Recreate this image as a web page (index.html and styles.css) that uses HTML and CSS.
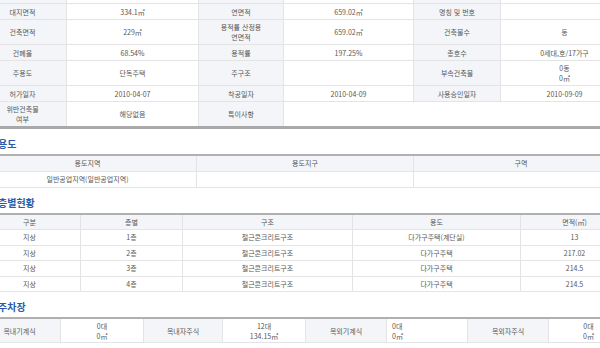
FILE: index.html
```html
<!DOCTYPE html>
<html lang="ko">
<head>
<meta charset="utf-8">
<link rel="stylesheet" href="styles.css">
</head>
<body>
<div class="wrap">
  <table class="tbl tbl-main">
    <colgroup><col style="width:88px"><col style="width:132px"><col style="width:85px"><col style="width:130px"><col style="width:87px"><col style="width:128px"></colgroup>
    <tr class="r1"><th></th><td></td><th></th><td></td><th></th><td></td></tr>
    <tr class="r1"><th>대지면적</th><td>334.1㎡</td><th>연면적</th><td>659.02㎡</td><th>명칭 및 번호</th><td></td></tr>
    <tr><th>건축면적</th><td>229㎡</td><th>용적률 산정용<br>연면적</th><td>659.02㎡</td><th>건축물수</th><td>동</td></tr>
    <tr class="r1"><th>건폐율</th><td>68.54%</td><th>용적률</th><td>197.25%</td><th>총호수</th><td>0세대,호/17가구</td></tr>
    <tr><th>주용도</th><td>단독주택</td><th>주구조</th><td></td><th>부속건축물</th><td>0동<br>0㎡</td></tr>
    <tr class="r1"><th>허가일자</th><td>2010-04-07</td><th>착공일자</th><td>2010-04-09</td><th>사용승인일자</th><td>2010-09-09</td></tr>
    <tr><th>위반건축물<br>여부</th><td>해당없음</td><th>특이사항</th><td colspan="3"></td></tr>
  </table>

  <h2 class="title">용도</h2>
  <table class="tbl tbl-use">
    <colgroup><col style="width:218px"><col style="width:217px"><col style="width:215px"></colgroup>
    <tr class="r1 head"><th>용도지역</th><th>용도지구</th><th>구역</th></tr>
    <tr class="r1"><td>일반공업지역(일반공업지역)</td><td></td><td></td></tr>
  </table>

  <h2 class="title">층별현황</h2>
  <table class="tbl tbl-floor">
    <colgroup><col style="width:102px"><col style="width:102px"><col style="width:170px"><col style="width:168px"><col style="width:108px"></colgroup>
    <tr class="r1 head"><th>구분</th><th>층별</th><th>구조</th><th>용도</th><th>면적(㎡)</th></tr>
    <tr class="rf"><td>지상</td><td>1층</td><td>철근콘크리트구조</td><td>다가구주택(계단실)</td><td>13</td></tr>
    <tr class="rf"><td>지상</td><td>2층</td><td>철근콘크리트구조</td><td>다가구주택</td><td>217.02</td></tr>
    <tr class="rf"><td>지상</td><td>3층</td><td>철근콘크리트구조</td><td>다가구주택</td><td>214.5</td></tr>
    <tr class="rf"><td>지상</td><td>4층</td><td>철근콘크리트구조</td><td>다가구주택</td><td>214.5</td></tr>
  </table>

  <h2 class="title">주차장</h2>
  <table class="tbl tbl-park">
    <colgroup><col style="width:82px"><col style="width:83px"><col style="width:79px"><col style="width:83px"><col style="width:81px"><col style="width:81px"><col style="width:81px"><col style="width:80px"></colgroup>
    <tr><th>옥내기계식</th><td>0대<br>0㎡</td><th>옥내자주식</th><td>12대<br>134.15㎡</td><th>옥외기계식</th><td class="val-left">0대<br>0㎡</td><th>옥외자주식</th><td>0대<br>0㎡</td></tr>
  </table>
</div>
</body>
</html>
```

FILE: styles.css
```css
html, body {
  margin: 0;
  padding: 0;
  background: #ffffff;
  overflow: hidden;
}
body {
  font-family: "Noto Sans CJK KR", "Noto Sans", sans-serif;
  font-size: 7px;
  color: #555555;
}
.wrap {
  width: 650px;
  margin: -13px 0 0 -22px;
}
.tbl {
  width: 650px;
  table-layout: fixed;
  border-collapse: collapse;
}
.tbl th,
.tbl td {
  border: 1px solid #e4e4e4;
  text-align: center;
  vertical-align: middle;
  padding: 2px 3px;
  line-height: 10px;
  font-weight: normal;
  color: #585858;
}
.tbl th {
  background: #f3f5f8;
}
.tbl td {
  background: #ffffff;
}
.tbl .head th {
  background: #f3f5f8;
}
.r1 {
  height: 16px;
}
.rf {
  height: 15.5px;
}
.tbl-main {
  border-bottom: 3px solid #a9a9a9;
}
.tbl-use,
.tbl-floor,
.tbl-park {
  border-top: 2px solid #b0b0b0;
  border-bottom: 1px solid #b0b0b0;
}
.tbl-park td,
.tbl-park th {
  padding: 1.5px 3px;
}
.tbl-park td.val-left {
  text-align: left;
  padding-left: 5px;
}
.title {
  margin: 0;
  padding: 5px 0 0 20px;
  height: 20px;
  line-height: 20px;
  font-size: 10px;
  font-weight: bold;
  color: #2a5ca8;
}
```
